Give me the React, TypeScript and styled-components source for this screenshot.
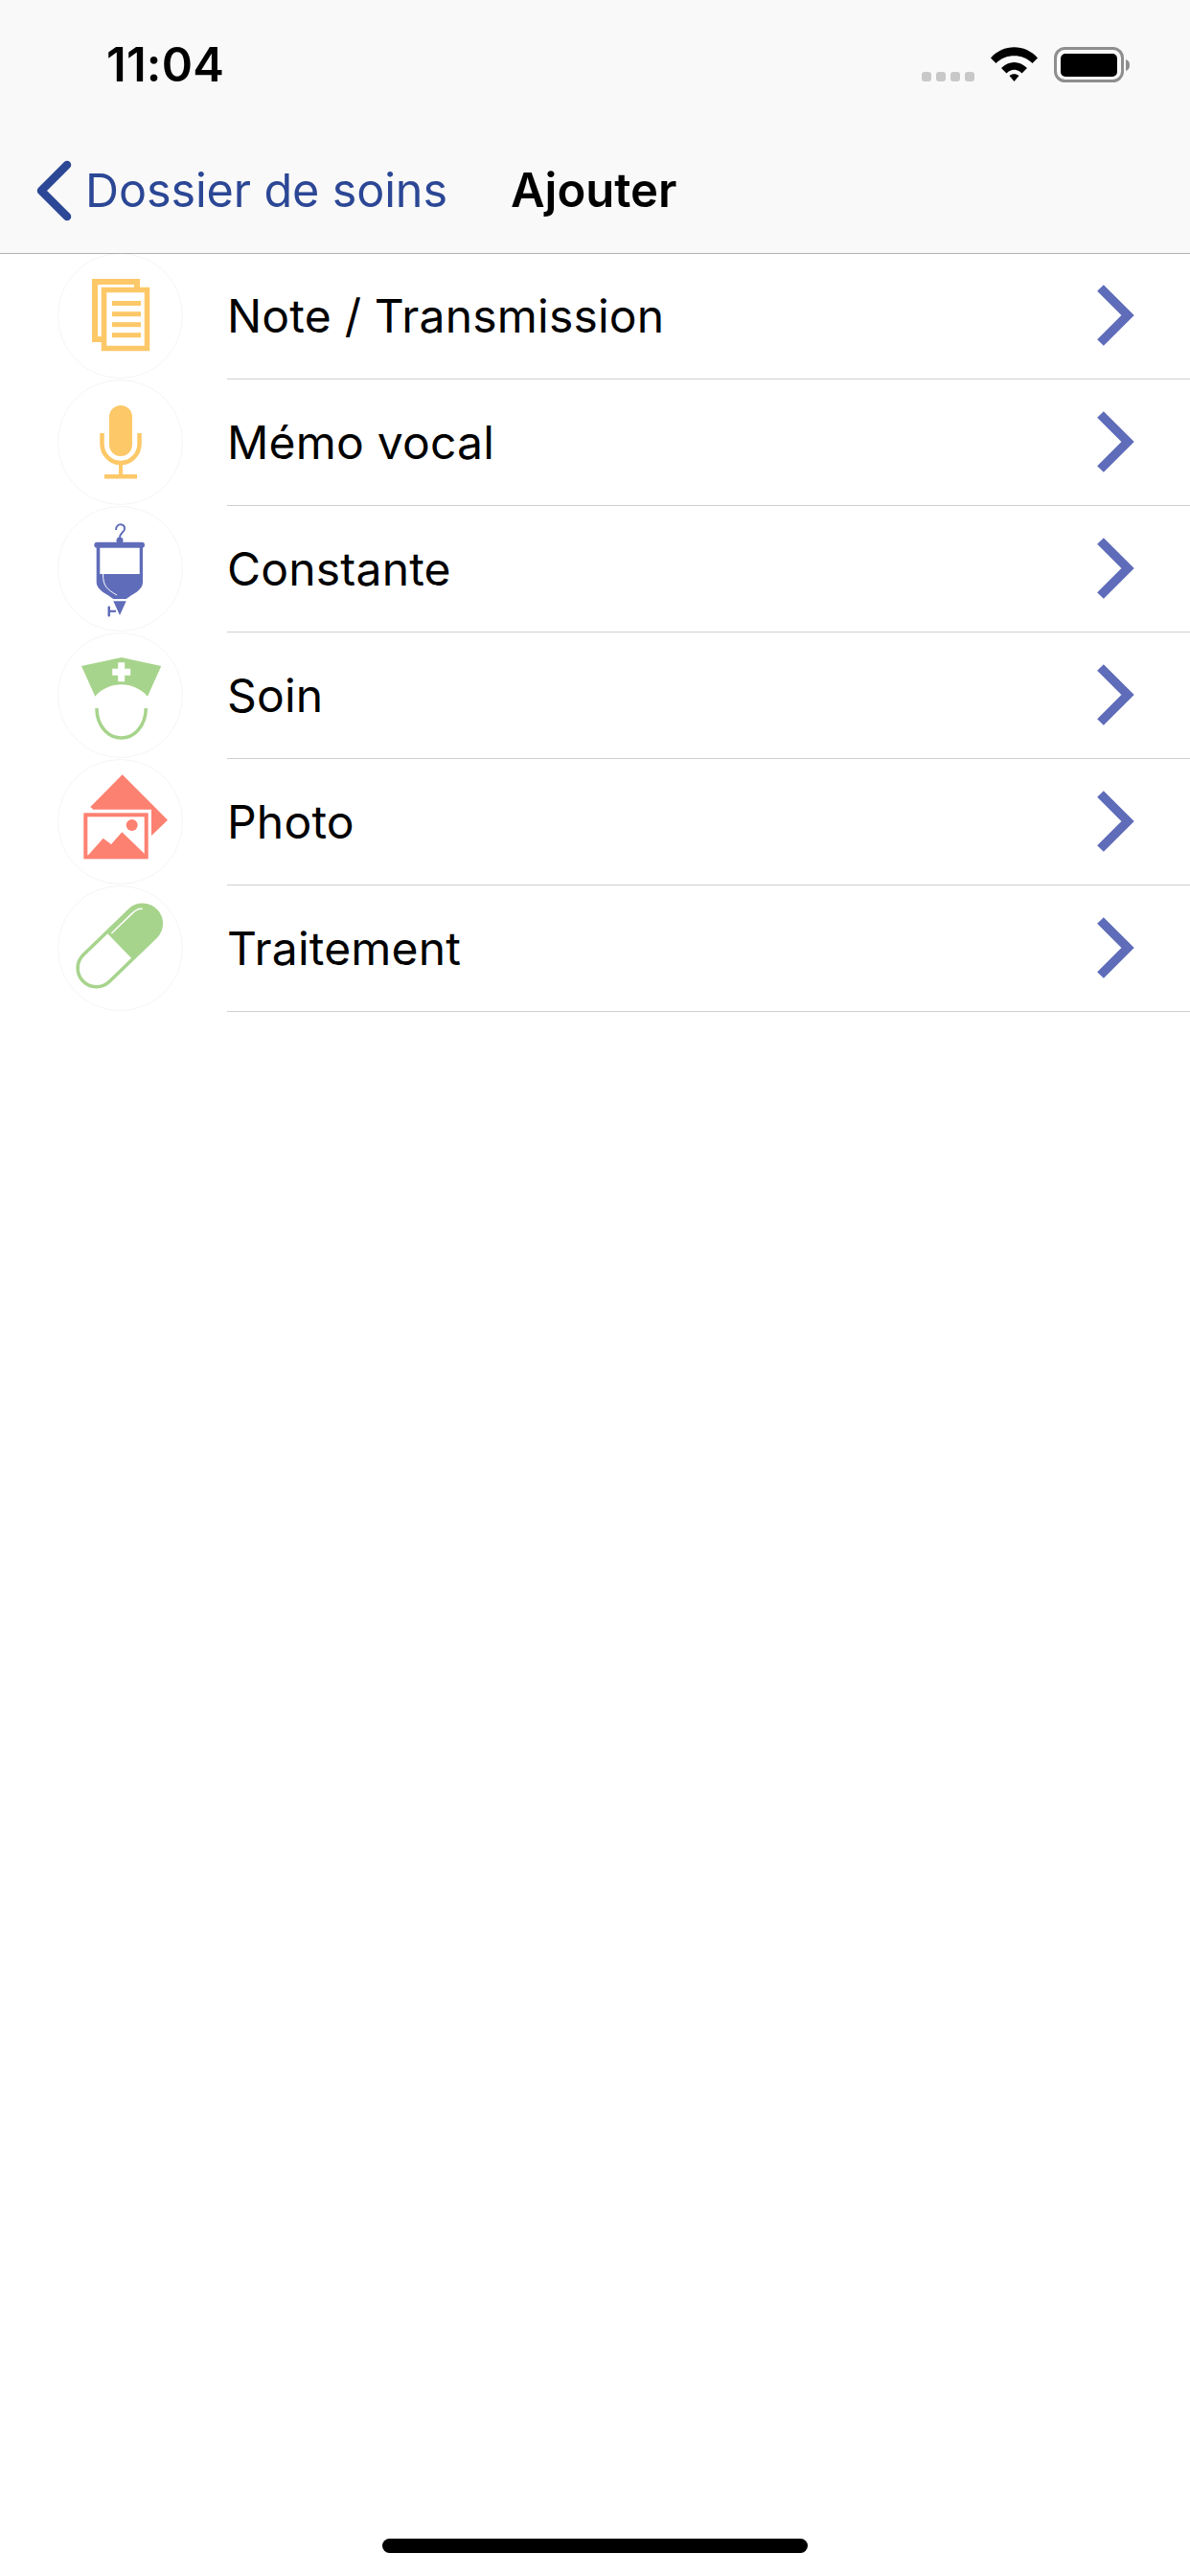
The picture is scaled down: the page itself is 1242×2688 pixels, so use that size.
import React from "react";
import styled, { createGlobalStyle } from "styled-components";

const Global = createGlobalStyle`
  html, body { margin: 0; padding: 0; background: #fff; }
  body { font-family: Inter, "Liberation Sans", sans-serif; color: #000; }
`;

const Page = styled.div`
  width: 1242px;
  height: 2688px;
  display: flex;
  flex-direction: column;
  overflow: hidden;
  background: #fff;
`;

const Header = styled.header`
  position: relative;
  z-index: 1;
  height: 264px;
  flex: none;
  background: #f9f9f9;
  box-shadow: 0 1px 0 #b2b2b2;
  display: flex;
  flex-direction: column;
`;

const StatusBar = styled.div`
  height: 136px;
  display: flex;
  align-items: flex-start;
  justify-content: space-between;
  padding: 49px 62px 0 111px;
  box-sizing: border-box;
`;

const Time = styled.span`
  font-size: 49px;
  line-height: 38px;
  font-weight: 600;
  letter-spacing: 0.2px;
`;

const StatusIcons = styled.div`
  display: flex;
  align-items: flex-start;
  gap: 17px;
`;

const Dots = styled.div`
  display: flex;
  gap: 5px;
  margin-top: 26px;
`;

const Dot = styled.i`
  width: 10px;
  height: 10px;
  border-radius: 3px;
  background: #c8c8c8;
`;

const Nav = styled.nav`
  flex: 1;
  display: flex;
  align-items: center;
  padding: 0 0 3px 37px;
`;

const BackText = styled.span`
  margin-left: 12px;
  font-size: 48.5px;
  color: #2b4795;
  letter-spacing: -0.1px;
`;

const Title = styled.span`
  margin-left: 66px;
  font-size: 49px;
  font-weight: 600;
`;

const List = styled.ul`
  list-style: none;
  margin: 0;
  padding: 0;
  flex: 1;
`;

const Row = styled.li`
  height: 132px;
  display: flex;
  padding-left: 60px;
`;

const Circle = styled.div`
  width: 131px;
  height: 131px;
  flex: none;
  box-sizing: border-box;
  border: 1px solid #f5f5f7;
  border-radius: 50%;
  display: flex;
  align-items: center;
  justify-content: center;
`;

const RowBody = styled.div`
  flex: 1;
  margin-left: 46px;
  height: 132px;
  box-sizing: border-box;
  border-bottom: 1px solid #cfcfcf;
  display: flex;
  align-items: center;
  justify-content: space-between;
  padding: 0 58px 1px 0;
`;

const Label = styled.span`
  font-size: 48px;
  letter-spacing: 0.2px;
`;

const HomeBar = styled.div`
  flex: none;
  width: 444px;
  height: 15px;
  margin: 0 auto 24px;
  border-radius: 8px;
  background: #000;
`;

const ICON = { width: 129, height: 129, viewBox: "1 1 129 129" };
const AMBER = "#fdc867";
const INDIGO = "#5f6cb9";
const GREEN = "#a7d48c";
const CORAL = "#fd8171";

const NotesIcon = () => (
  <svg {...ICON}>
    <rect x="39" y="30" width="44" height="60" fill="#fff" stroke={AMBER} strokeWidth="6" />
    <rect x="48.5" y="38.5" width="45" height="61" fill="#fff" stroke={AMBER} strokeWidth="5.5" />
    {[50, 61.2, 72.2, 83.2].map((y) => (
      <rect key={y} x="57" y={y} width="30" height="5" fill={AMBER} />
    ))}
  </svg>
);

const MicIcon = () => (
  <svg {...ICON}>
    <rect x="54" y="27" width="24" height="53" rx="12" fill={AMBER} />
    <path d="M46.5 56V67a19.5 20 0 0 0 39 0V56" fill="none" stroke={AMBER} strokeWidth="4.5" />
    <rect x="64" y="87" width="4" height="13" fill={AMBER} />
    <rect x="49" y="99" width="34" height="4.5" fill={AMBER} />
  </svg>
);

const DripIcon = () => (
  <svg {...ICON}>
    <path d="M61 25C61 17 71 18 70 24C69.5 28 65 28 65 33" fill="none" stroke={INDIGO} strokeWidth="2" />
    <circle cx="65" cy="36" r="3.5" fill={INDIGO} />
    <rect x="38.3" y="37.7" width="52.7" height="6" rx="3" fill={INDIGO} />
    <path d="M40.7 43V80C41 88 52 92 58.3 97H71.7C78 92 89 88 89 80V43Z" fill={INDIGO} />
    <rect x="44.3" y="43.7" width="41.4" height="27.3" fill="#fff" />
    <path d="M47.5 71C47.5 84 52 87 62 93" fill="none" stroke="#fff" strokeWidth="1" />
    <path d="M58.3 99.3H71.7L65 114Z" fill={INDIGO} />
    <rect x="52.5" y="104.5" width="2.5" height="11" rx="1" fill={INDIGO} />
    <rect x="54" y="108.7" width="7" height="2.2" fill={INDIGO} />
  </svg>
);

const NurseIcon = () => (
  <svg {...ICON}>
    <path d="M25 35L66.7 26L108.3 35L94 66.7C80 50 53 50 39.3 66.7Z" fill={GREEN} />
    <path d="M63.2 31.2H70.2V37.7H76.2V44.7H70.2V51.2H63.2V44.7H57.2V37.7H63.2Z" fill="#fff" />
    <path d="M40.9 79C41 99 54 110 66.7 110C79 110 92 99 92.3 79" fill="none" stroke={GREEN} strokeWidth="3.5" />
  </svg>
);

const PhotoIcon = () => (
  <svg {...ICON}>
    <path d="M67.7 16.3L115 63.7L98 80V52.7H37.3L34.3 50Z" fill={CORAL} />
    <rect x="29.3" y="58.3" width="63.4" height="44" fill="#fff" stroke={CORAL} strokeWidth="4" />
    <circle cx="77.7" cy="69" r="6" fill={CORAL} />
    <path d="M29 103.7L47.7 82.7L56 89L67.3 76.3L93 101V103.7Z" fill={CORAL} />
  </svg>
);

const PillIcon = () => (
  <svg {...ICON}>
    <g transform="translate(64.7 63) rotate(-44)">
      <rect x="-53" y="-19.5" width="106" height="39" rx="19.5" fill="#fff" stroke={GREEN} strokeWidth="3.5" />
      <path d="M0-19.5H33.5a19.5 19.5 0 0 1 0 39H0Z" fill={GREEN} />
      <path d="M3-15.2H32C38-15.2 42-14 44-11" fill="none" stroke="#fff" strokeWidth="1.5" />
    </g>
  </svg>
);

const Chevron = () => (
  <svg width="40" height="66" viewBox="0 0 40 66">
    <path d="M4.5 4.5L33 33L4.5 61.5" fill="none" stroke={INDIGO} strokeWidth="9.5" strokeLinejoin="miter" />
  </svg>
);

const BackChevron = () => (
  <svg width="40" height="64" viewBox="0 0 40 64">
    <path d="M33 5L6 32L33 59" fill="none" stroke="#2b4795" strokeWidth="8.5" strokeLinecap="round" strokeLinejoin="round" />
  </svg>
);

const Wifi = () => (
  <svg width="49" height="36" viewBox="0 0 49 36">
    <path d="M0 11.5C13-3.5 36-3.5 49 11.5L43.5 17C33.5 6.5 15.5 6.5 5.5 17Z" />
    <path d="M11 22C19 14 30 14 38 22L32.5 27.5C27.5 22.5 21.5 22.5 16.5 27.5Z" />
    <path d="M19.5 30C22.5 27.5 26.5 27.5 29.5 30L24.5 36Z" />
  </svg>
);

const Battery = () => (
  <svg width="80" height="38" viewBox="0 0 80 38">
    <rect x="1.5" y="1.5" width="70" height="34" rx="10" fill="none" stroke="#8e8e8e" strokeWidth="3" />
    <rect x="7" y="7" width="59" height="24" rx="5" fill="#000" />
    <path d="M75 13C78 14 79 16 79 19S78 24 75 25Z" fill="#8e8e8e" />
  </svg>
);

const ITEMS: [string, React.FC][] = [
  ["Note / Transmission", NotesIcon],
  ["Mémo vocal", MicIcon],
  ["Constante", DripIcon],
  ["Soin", NurseIcon],
  ["Photo", PhotoIcon],
  ["Traitement", PillIcon],
];

export default function App() {
  return (
    <Page>
      <Global />
      <Header>
        <StatusBar>
          <Time>11:04</Time>
          <StatusIcons>
            <Dots>
              <Dot />
              <Dot />
              <Dot />
              <Dot />
            </Dots>
            <Wifi />
            <Battery />
          </StatusIcons>
        </StatusBar>
        <Nav>
          <BackChevron />
          <BackText>Dossier de soins</BackText>
          <Title>Ajouter</Title>
        </Nav>
      </Header>
      <List>
        {ITEMS.map(([label, Icon]) => (
          <Row key={label}>
            <Circle>
              <Icon />
            </Circle>
            <RowBody>
              <Label>{label}</Label>
              <Chevron />
            </RowBody>
          </Row>
        ))}
      </List>
      <HomeBar />
    </Page>
  );
}
